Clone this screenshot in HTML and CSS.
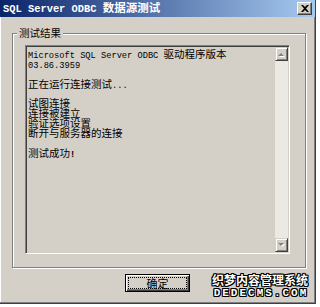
FILE: index.html
```html
<!DOCTYPE html>
<html lang="zh-CN">

<head>
    <meta charset="UTF-8">
    <title>SQL Server ODBC 数据源测试</title>
    <link rel="stylesheet" href="styles.css">
</head>

<body>

    <div class="window">

        <!-- 标题栏 -->
        <div class="titlebar">
            <span class="title"><span class="en">SQL Server ODBC </span>数据源测试</span>
            <span class="close">
                <svg width="8" height="7" viewBox="0 0 8 7">
                    <path d="M0 0h2l2 2 2-2h2L5 3.5 8 7H6L4 5 2 7H0l3-3.5z" fill="#000" />
                </svg>
            </span>
        </div>

        <div class="content">
            <!-- 测试结果 -->
            <div class="group">
                <span class="legend">测试结果</span>
                <div class="edit">
                    <div class="text">
                        <p><span class="en">Microsoft SQL Server ODBC </span>驱动程序版本</p>
                        <p><span class="en">03.86.3959</span></p>
                        <p>&nbsp;</p>
                        <p>正在运行连接测试<span class="en">...</span></p>
                        <p>&nbsp;</p>
                        <p>试图连接</p>
                        <p>连接被建立</p>
                        <p>验证选项设置</p>
                        <p>断开与服务器的连接</p>
                        <p>&nbsp;</p>
                        <p>测试成功<b class="en">!</b></p>
                    </div>
                    <div class="scrollbar">
                        <span class="arrow">
                            <svg width="7" height="5" viewBox="0 0 7 5">
                                <path d="M4 2l3 3H1z" fill="#fff" />
                                <path d="M3 1l3 3H0z" fill="#808080" />
                            </svg>
                        </span>
                        <span class="track"></span>
                        <span class="arrow">
                            <svg width="7" height="5" viewBox="0 0 7 5">
                                <path d="M1 1h6L4 4z" fill="#fff" />
                                <path d="M0 0h6L3 3z" fill="#808080" />
                            </svg>
                        </span>
                    </div>
                </div>
            </div>

            <div class="buttons">
                <button class="btn"><span class="focus">确定</span></button>
            </div>
        </div>

        <!-- 水印 -->
        <div class="mark">
            <span class="mark-cn">织梦内容管理系统</span>
            <span class="mark-en">DEDECMS.COM</span>
        </div>
    </div>

</body>

</html>
```

FILE: styles.css
```css
* {
    padding: 0;
    margin: 0;
    box-sizing: border-box;
}

body {
    background: #fff;
    font-family: "Noto Sans CJK SC", sans-serif;
    font-size: 10.5px;
    color: #000;
}

.en {
    font-family: "Liberation Mono", monospace;
    font-size: 8.7px;
}

.window {
    width: 316px;
    height: 304px;
    background: #d4d0c8;
    border-right: 1px solid #404040;
    border-bottom: 1px solid #404040;
    box-shadow: inset -1px -1px 0 #808080, inset 1px 0 0 #fff;
    display: flex;
    flex-direction: column;
    position: relative;
}

.titlebar {
    height: 17px;
    background: linear-gradient(to right, #0a246a, #a6caf0);
    display: flex;
    align-items: center;
    justify-content: space-between;
    padding: 0 3px 0 3px;
    color: #fff;
    font-weight: bold;
    font-size: 11.5px;
}

.title {
    line-height: 17px;
    white-space: nowrap;
}

.titlebar .en {
    font-size: 10.4px;
    font-weight: bold;
}

.close {
    width: 15px;
    height: 13px;
    background: #d4d0c8;
    border: 1px solid;
    border-color: #fff #404040 #404040 #fff;
    box-shadow: inset -1px -1px 0 #808080;
    display: flex;
    align-items: center;
    justify-content: center;
}

.content {
    flex: 1;
    padding: 16px 9px 0 12px;
    display: flex;
    flex-direction: column;
}

/* 分组框 */
.group {
    height: 235px;
    border: 1px solid #808080;
    box-shadow: inset 1px 1px 0 #fff, 1px 1px 0 #fff;
    padding: 11px 15px 12px 12px;
    position: relative;
}

.legend {
    position: absolute;
    left: 4px;
    top: -8px;
    padding: 0 2px;
    background: #d4d0c8;
    line-height: 14px;
}

.edit {
    height: 209px;
    border: 1px solid;
    border-color: #808080 #fff #fff #808080;
    box-shadow: inset 1px 1px 0 #404040, inset -1px -1px 0 #d4d0c8;
    padding: 1px 1px 1px 1px;
    display: flex;
}

.text {
    flex: 1;
    padding: 2px 0 0 1px;
    line-height: 9.9px;
    white-space: nowrap;
    overflow: hidden;
}

.text p {
    height: 9.9px;
}

.scrollbar {
    width: 13px;
    display: flex;
    flex-direction: column;
    background: #ebe9e4;
}

.arrow {
    height: 14px;
    background: #d4d0c8;
    border: 1px solid;
    border-color: #d4d0c8 #404040 #404040 #d4d0c8;
    box-shadow: inset 1px 1px 0 #fff, inset -1px -1px 0 #808080;
    display: flex;
    align-items: center;
    justify-content: center;
}

.track {
    flex: 1;
}

.buttons {
    display: flex;
    justify-content: center;
    padding-top: 6px;
    padding-right: 3px;
}

.btn {
    width: 65px;
    height: 18px;
    background: #d4d0c8;
    border: 1px solid #000;
    box-shadow: inset 1px 1px 0 #fff, inset -1px -1px 0 #404040, inset -2px -2px 0 #808080;
    font-family: "Noto Sans CJK SC", sans-serif;
    font-size: 11px;
    color: #000;
    padding: 2px;
    display: flex;
}

.focus {
    flex: 1;
    border: 1px dotted #000;
    line-height: 10px;
    display: flex;
    align-items: center;
    justify-content: center;
}

/* 水印 */
.mark {
    position: absolute;
    right: 7px;
    bottom: 4px;
    display: flex;
    flex-direction: column;
    align-items: center;
    color: #fff;
    font-weight: bold;
    text-shadow: 1px 0 0 #000, -1px 0 0 #000, 0 1px 0 #000, 0 -1px 0 #000,
        1px 1px 0 #000, -1px -1px 0 #000, 1px -1px 0 #000, -1px 1px 0 #000;
}

.mark-cn {
    font-size: 12px;
    line-height: 15px;
}

.mark-en {
    font-family: "Liberation Mono", monospace;
    font-size: 11px;
    letter-spacing: 2px;
    line-height: 12px;
    margin-right: -2px;
}
```
